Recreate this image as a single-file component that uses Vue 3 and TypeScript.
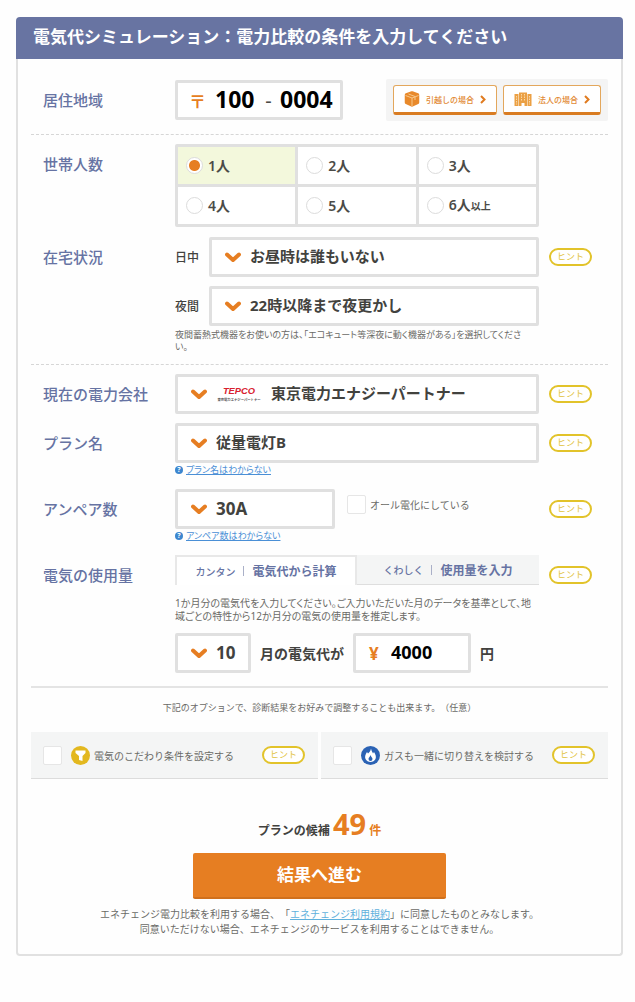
<script setup lang="ts">
import { ref } from 'vue'

const zipFirst = ref('100')
const zipLast = ref('0004')
const household = ref(1)
const people = [1, 2, 3, 4, 5, 6]
const daytime = ref('お昼時は誰もいない')
const night = ref('22時以降まで夜更かし')
const company = ref('東京電力エナジーパートナー')
const plan = ref('従量電灯B')
const ampere = ref('30A')
const allElectric = ref(false)
const tab = ref<'easy' | 'detail'>('easy')
const month = ref('10')
const cost = ref('4000')
const preference = ref(false)
const gas = ref(false)
const candidates = 49
</script>

<template>
  <form class="card" @submit.prevent>
    <h1 class="title">電気代シミュレーション：電力比較の条件を入力してください</h1>
    <div class="body">
      <section class="section area">
        <div class="row-area">
          <label class="label" for="zip1">居住地域</label>
          <div class="box zip">
            <span class="mark">〒</span>
            <input id="zip1" v-model="zipFirst" class="zip-input first" maxlength="3" />
            <span class="hyphen">-</span>
            <input v-model="zipLast" class="zip-input last" maxlength="4" aria-label="郵便番号の下4桁" />
          </div>
          <div class="cases">
            <button type="button" class="case">
              <svg width="16" height="16" viewBox="0 0 32 32" aria-hidden="true">
                <path d="M16 4 27 8v15l-11 5-11-5V8z" fill="#e8892b" stroke="#e8892b" stroke-width="7" stroke-linejoin="round" />
                <path d="M3 9l13 5 13-5M16 14v16M9 6l13 5v7" fill="none" stroke="#f8c88a" stroke-width="2" />
              </svg>
              <span>引越しの場合</span>
              <svg class="go" width="6" height="9" viewBox="0 0 6 9" aria-hidden="true"><path d="M1 1l3.5 3.5L1 8" /></svg>
            </button>
            <button type="button" class="case">
              <svg width="18" height="14" viewBox="0 0 36 28" aria-hidden="true">
                <path d="M1 4h8v24H1zM27 4h8v24h-8zM10 1h16v27h-5v-6h-6v6h-5z" fill="#eba044" />
                <path d="M5 8v17M31 8v17M15 4v15M21 4v15" fill="none" stroke="#f9d9a8" stroke-width="2" stroke-dasharray="3 2" />
              </svg>
              <span>法人の場合</span>
              <svg class="go" width="6" height="9" viewBox="0 0 6 9" aria-hidden="true"><path d="M1 1l3.5 3.5L1 8" /></svg>
            </button>
          </div>
        </div>
      </section>

      <section class="section living">
        <div class="row" role="radiogroup" aria-labelledby="household-label">
          <span id="household-label" class="label">世帯人数</span>
          <div class="people">
            <label v-for="n in people" :key="n" class="person" :class="{ on: household === n }">
              <input v-model="household" type="radio" name="household" :value="n" />
              <span>{{ n }}人<small v-if="n === 6">以上</small></span>
            </label>
          </div>
        </div>
        <div class="row home">
          <span class="label">在宅状況</span>
          <div>
            <div class="timed">
              <label for="daytime">日中</label>
              <div class="box">
                <svg class="chev" width="16" height="11" viewBox="0 0 16 11" aria-hidden="true"><path d="M2 2.5l6 5.5 6-5.5" /></svg>
                <select id="daytime" v-model="daytime"><option>お昼時は誰もいない</option></select>
              </div>
            </div>
            <div class="timed">
              <label for="night">夜間</label>
              <div class="box">
                <svg class="chev" width="16" height="11" viewBox="0 0 16 11" aria-hidden="true"><path d="M2 2.5l6 5.5 6-5.5" /></svg>
                <select id="night" v-model="night"><option>22時以降まで夜更かし</option></select>
              </div>
            </div>
            <p class="note small">夜間蓄熱式機器をお使いの方は、「エコキュート等深夜に動く機器がある」を選択してくださ<br />い。</p>
          </div>
          <button type="button" class="hint">ヒント</button>
        </div>
      </section>

      <section class="section last-section">
        <div class="row">
          <label class="label" for="company">現在の電力会社</label>
          <div class="box">
            <svg class="chev" width="16" height="11" viewBox="0 0 16 11" aria-hidden="true"><path d="M2 2.5l6 5.5 6-5.5" /></svg>
            <svg class="tepco" width="46" height="18" viewBox="0 0 138 54" aria-hidden="true">
              <text x="69" y="27" text-anchor="middle" class="tepco-name">TEPCO</text>
              <text x="69" y="48" text-anchor="middle" class="tepco-sub">東京電力エナジーパートナー</text>
            </svg>
            <select id="company" v-model="company"><option>東京電力エナジーパートナー</option></select>
          </div>
          <button type="button" class="hint">ヒント</button>
        </div>
        <div class="row plan">
          <label class="label" for="plan">プラン名</label>
          <div>
            <div class="box">
              <svg class="chev" width="16" height="11" viewBox="0 0 16 11" aria-hidden="true"><path d="M2 2.5l6 5.5 6-5.5" /></svg>
              <select id="plan" v-model="plan"><option>従量電灯B</option></select>
            </div>
            <a class="help" href="#"><span class="q">?</span><span class="help-text">プラン名はわからない</span></a>
          </div>
          <button type="button" class="hint">ヒント</button>
        </div>
        <div class="row after-help">
          <label class="label" for="ampere">アンペア数</label>
          <div>
            <div class="ampere">
              <div class="box num">
                <svg class="chev" width="16" height="11" viewBox="0 0 16 11" aria-hidden="true"><path d="M2 2.5l6 5.5 6-5.5" /></svg>
                <select id="ampere" v-model="ampere"><option>30A</option></select>
              </div>
              <label class="check"><input v-model="allElectric" type="checkbox" />オール電化にしている</label>
            </div>
            <a class="help" href="#"><span class="q">?</span><span class="help-text">アンペア数はわからない</span></a>
          </div>
          <button type="button" class="hint">ヒント</button>
        </div>
        <div class="row after-help">
          <span class="label">電気の使用量</span>
          <div>
            <div class="tabs" role="tablist">
              <button type="button" role="tab" class="tab" :class="{ active: tab === 'easy' }" :aria-selected="tab === 'easy'" @click="tab = 'easy'">
                <small>カンタン</small><i></i><b>電気代から計算</b>
              </button>
              <button type="button" role="tab" class="tab" :class="{ active: tab === 'detail' }" :aria-selected="tab === 'detail'" @click="tab = 'detail'">
                <small>くわしく</small><i></i><b>使用量を入力</b>
              </button>
            </div>
            <p class="note">1か月分の電気代を入力してください。ご入力いただいた月のデータを基準として、地域ごとの特性から12か月分の電気の使用量を推定します。</p>
            <div class="bill">
              <div class="box num month">
                <svg class="chev" width="16" height="11" viewBox="0 0 16 11" aria-hidden="true"><path d="M2 2.5l6 5.5 6-5.5" /></svg>
                <select id="month" v-model="month"><option>10</option></select>
              </div>
              <label for="month">月の電気代が</label>
              <div class="box cost">
                <span class="yen">¥</span>
                <input id="cost" v-model="cost" inputmode="numeric" />
              </div>
              <label for="cost">円</label>
            </div>
          </div>
          <button type="button" class="hint">ヒント</button>
        </div>
      </section>

      <p class="intro">下記のオプションで、診断結果をお好みで調整することも出来ます。（任意）</p>
      <div class="options">
        <div class="option">
          <label class="check">
            <input v-model="preference" type="checkbox" />
            <svg width="19" height="19" viewBox="0 0 38 38" aria-hidden="true">
              <circle cx="19" cy="19" r="19" fill="#e3b81f" />
              <path d="M9 9h20v5l-6 6v10l-7-2v-8l-7-6z" fill="#fff" />
            </svg>
            電気のこだわり条件を設定する
          </label>
          <button type="button" class="hint">ヒント</button>
        </div>
        <div class="option">
          <label class="check">
            <input v-model="gas" type="checkbox" />
            <svg width="19" height="19" viewBox="0 0 38 38" aria-hidden="true">
              <circle cx="19" cy="19" r="19" fill="#2a62b4" />
              <path d="M20 5c1 6 3 7 4 10l2-3c3 5 5 9 3 14-2 4-6 6-10 6s-8-2-10-6c-2-5 0-9 3-14l2 3c3-3 5-5 6-10z" fill="#fff" />
              <path d="M19 18c1 4 4 5 4 8a4 4 0 0 1-8 0c0-3 3-4 4-8z" fill="#2a62b4" />
            </svg>
            ガスも一緒に切り替えを検討する
          </label>
          <button type="button" class="hint">ヒント</button>
        </div>
      </div>

      <p class="count">プランの候補 <strong>{{ candidates }}</strong> <em>件</em></p>
      <button type="submit" class="submit">結果へ進む</button>
      <p class="terms">
        エネチェンジ電力比較を利用する場合、「<a href="#">エネチェンジ利用規約</a>」に同意したものとみなします。<br />
        同意いただけない場合、エネチェンジのサービスを利用することはできません。
      </p>
    </div>
  </form>
</template>

<style>
body {
  background: #fefefe;
}
</style>

<style scoped>
.card,
.card button,
.card input,
.card select {
  font-family: "Noto Sans", "Noto Sans CJK JP", sans-serif;
}
.card {
  margin: 17px 12px 0 16px;
  color: #4b4b47;
  font-size: 10px;
  text-spacing-trim: space-all;
}
.card *,
.card *::before {
  box-sizing: border-box;
}
p,
h1 {
  margin: 0;
}
button {
  padding: 0;
  cursor: pointer;
}
.title {
  padding: 0 0 2px 17px;
  border-radius: 4px 4px 0 0;
  background: #6874a2;
  color: #fff;
  font-size: 17px;
  line-height: 40px;
  font-weight: 700;
}
.body {
  padding: 0 13px 17px;
  border: 2px solid #e1e1e1;
  border-top: 0;
  border-radius: 0 0 4px 4px;
}
.section {
  padding: 9px 0 13px;
  border-bottom: 1px dashed #d6d6d6;
}
.area {
  padding-top: 20px;
}
.living {
  padding-bottom: 11px;
}
.last-section {
  border-bottom: 2px solid #e4e4e4;
}
.row {
  display: grid;
  grid-template-columns: 144px minmax(0, 1fr) 69px;
  align-items: start;
}
.row + .row {
  margin-top: 9px;
}
.row + .home {
  margin-top: 10px;
}
.row + .after-help {
  margin-top: 12px;
}
.row-area {
  display: flex;
  align-items: center;
}
.row-area .label {
  width: 144px;
}
.label {
  padding-left: 12px;
  color: #6673a3;
  font-size: 15px;
  line-height: 40px;
  font-weight: 500;
}
.box {
  display: flex;
  align-items: center;
  height: 40px;
  padding-left: 13px;
  border: 3px solid #e0e0e0;
  border-radius: 2px;
  background: #fff;
}
.box select,
.box input {
  min-width: 0;
  flex: 1;
  height: 34px;
  padding: 0 0 2px;
  border: 0;
  outline: 0;
  background: transparent;
  color: #42423e;
  font-size: 15px;
  font-weight: 700;
  appearance: none;
}
.chev {
  flex: none;
  margin-right: 9px;
}
.chev path {
  fill: none;
  stroke: #e67e22;
  stroke-width: 4;
  stroke-linecap: round;
  stroke-linejoin: round;
}
.zip {
  width: 168px;
  padding-left: 11px;
}
.mark {
  width: 26px;
  color: #e67e22;
  font-size: 17px;
  font-weight: 700;
}
.box .zip-input {
  flex: none;
  color: #000;
  font-size: 23px;
}
.box .first {
  width: 42px;
}
.box .last {
  width: 56px;
}
.hyphen {
  width: 23px;
  text-align: center;
  font-size: 20px;
}
.cases {
  display: flex;
  gap: 6px;
  margin-left: auto;
  padding: 6px 7px;
  border-radius: 2px;
  background: #f4f4f4;
}
.case {
  display: flex;
  align-items: center;
  gap: 6px;
  height: 30px;
  padding: 0 10px;
  border: 1px solid #e3a75c;
  border-bottom: 3px solid #d97c22;
  border-radius: 3px;
  background: #fff;
  color: #e28a35;
  font-size: 8px;
  font-weight: 500;
  white-space: nowrap;
}
.go path {
  fill: none;
  stroke: #e07b20;
  stroke-width: 2;
}
.people {
  display: grid;
  grid-template-columns: repeat(3, 1fr);
  gap: 3px;
  padding: 3px;
  border-radius: 2px;
  background: #e0e0e0;
}
.person {
  display: flex;
  align-items: center;
  gap: 5px;
  height: 37px;
  padding-left: 8px;
  background: #fff;
  font-size: 14px;
  line-height: 18px;
  font-weight: 600;
}
.person small {
  font-size: 10px;
}
.person.on {
  background: #f3f8dc;
}
.person input {
  width: 17px;
  height: 17px;
  margin: 0;
  border: 1px solid #dcdcdc;
  border-radius: 50%;
  background: #fff;
  appearance: none;
}
.person input:checked {
  background: radial-gradient(circle, #e67e22 5px, #fff 6px);
}
.timed {
  display: grid;
  grid-template-columns: 34px minmax(0, 1fr);
  align-items: center;
  color: #42423e;
  font-size: 12px;
  font-weight: 500;
}
.timed + .timed {
  margin-top: 9px;
}
.note {
  margin-top: 12px;
  color: #6a6a66;
  font-size: 10px;
  line-height: 13px;
  font-feature-settings: "palt";
}
.note.small {
  margin-top: 3px;
  font-size: 9px;
  line-height: 12px;
}
.hint {
  width: 43px;
  height: 18px;
  margin: 11px 0 0 10px;
  border: 2px solid #e2c32a;
  border-radius: 9px;
  background: #fff;
  color: #dfc23a;
  font-size: 9px;
  line-height: 14px;
}
.tepco {
  flex: none;
  margin-right: 9px;
}
.tepco-name {
  fill: #d8202f;
  font: italic 700 28px "Liberation Sans", sans-serif;
}
.tepco-sub {
  fill: #555;
  font-size: 10px;
  font-weight: 700;
}
.help {
  display: flex;
  align-items: center;
  gap: 3px;
  height: 14px;
  color: #4a8fd6;
  font-size: 9px;
  line-height: 14px;
  text-decoration: none;
}
.help-text {
  text-decoration: underline;
  font-feature-settings: "palt";
}
.q {
  width: 8px;
  height: 8px;
  border-radius: 50%;
  background: #3c86cf;
  color: #fff;
  font-size: 7px;
  line-height: 8px;
  font-weight: 700;
  text-align: center;
}
.ampere {
  display: flex;
}
.ampere .box {
  width: 160px;
}
.ampere .check {
  height: 18px;
  margin: 6px 0 0 12px;
}
.box.num select {
  font-size: 17px;
}
.check {
  display: flex;
  align-items: center;
  gap: 4px;
  color: #6a6a66;
  font-size: 10px;
}
.check input {
  width: 19px;
  height: 19px;
  margin: 0;
  border: 1px solid #e6e6e6;
  border-radius: 2px;
  background: #fff;
  appearance: none;
}
.check input:checked {
  background: #e67e22;
}
.tabs {
  display: grid;
  grid-template-columns: 1fr 1fr;
}
.tab {
  display: flex;
  align-items: center;
  justify-content: center;
  height: 30px;
  border: 0;
  border-bottom: 1px solid #dedede;
  background: #f4f5f5;
  color: #6673a3;
}
.tab.active {
  border: 2px solid #e8e8e8;
  border-bottom: 0;
  background: #fff;
}
.tab small {
  font-size: 10px;
  font-weight: 500;
}
.tab i {
  width: 1px;
  height: 10px;
  margin: 0 8px;
  background: #aab0c8;
}
.tab b {
  font-size: 12px;
  font-weight: 600;
}
.bill {
  display: flex;
  align-items: center;
  gap: 9px;
  margin-top: 10px;
  color: #42423e;
  font-size: 14px;
  font-weight: 600;
}
.month {
  width: 76px;
}
.cost {
  width: 118px;
}
.yen {
  width: 22px;
  color: #e67e22;
  font-size: 17px;
  font-weight: 700;
}
.box.cost input {
  color: #000;
  font-size: 18px;
}
.intro {
  margin-top: 12px;
  color: #6a6a66;
  font-size: 9px;
  line-height: 16px;
  text-align: center;
}
.options {
  display: grid;
  grid-template-columns: 1fr 1fr;
  gap: 3px;
  margin-top: 16px;
}
.option {
  display: flex;
  align-items: center;
  justify-content: space-between;
  height: 47px;
  padding: 0 13px 0 12px;
  border-bottom: 1px solid #dcdcdc;
  background: #f4f5f5;
}
.option .hint {
  margin: 0;
}
.option svg {
  margin-left: 5px;
}
.count {
  margin-top: 28px;
  color: #42423e;
  font-size: 12px;
  line-height: 34px;
  font-weight: 600;
  text-align: center;
}
.count strong {
  color: #e67e22;
  font-size: 29px;
  font-weight: 700;
}
.count em {
  color: #e67e22;
  font-style: normal;
}
.submit {
  display: block;
  width: 44%;
  height: 46px;
  margin: 5px auto 0;
  padding-bottom: 3px;
  border: 0;
  border-bottom: 2px solid #d0701c;
  border-radius: 2px;
  background: #e67e22;
  color: #fff;
  font-size: 17px;
  font-weight: 700;
}
.terms {
  margin-top: 8px;
  color: #6a6a66;
  font-size: 10px;
  line-height: 15px;
  text-align: center;
}
.terms a {
  color: #5fb0dc;
}
</style>
